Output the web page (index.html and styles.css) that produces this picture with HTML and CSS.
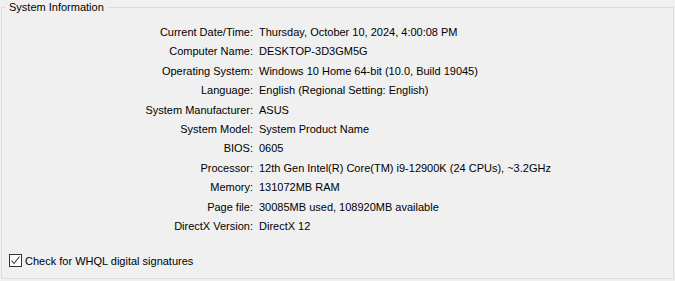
FILE: index.html
```html
<!DOCTYPE html>
<html>
<head>
    <meta charset="utf-8" />
    <title>System Information</title>
    <link rel="stylesheet" href="styles.css">
</head>
<body>
    <fieldset class="infoGroup">
        <legend class="groupTitle">System Information</legend>
        <div class="infoTable">
            <span class="infoLabel">Current Date/Time:</span><span class="infoValue">Thursday, October 10, 2024, 4:00:08 PM</span>
            <span class="infoLabel">Computer Name:</span><span class="infoValue">DESKTOP-3D3GM5G</span>
            <span class="infoLabel">Operating System:</span><span class="infoValue">Windows 10 Home 64-bit (10.0, Build 19045)</span>
            <span class="infoLabel">Language:</span><span class="infoValue">English (Regional Setting: English)</span>
            <span class="infoLabel">System Manufacturer:</span><span class="infoValue">ASUS</span>
            <span class="infoLabel">System Model:</span><span class="infoValue">System Product Name</span>
            <span class="infoLabel">BIOS:</span><span class="infoValue">0605</span>
            <span class="infoLabel">Processor:</span><span class="infoValue">12th Gen Intel(R) Core(TM) i9-12900K (24 CPUs), ~3.2GHz</span>
            <span class="infoLabel">Memory:</span><span class="infoValue">131072MB RAM</span>
            <span class="infoLabel">Page file:</span><span class="infoValue">30085MB used, 108920MB available</span>
            <span class="infoLabel">DirectX Version:</span><span class="infoValue">DirectX 12</span>
        </div>
        <label class="whqlCheck">
            <span class="checkBox">
                <svg width="11" height="11" viewBox="0 0 11 11"><path d="M1.5 5.5 L4 8.5 L9.5 1.5" fill="none" stroke="#333" stroke-width="1.1"/></svg>
            </span>
            Check for WHQL digital signatures
        </label>
    </fieldset>
</body>
</html>
```

FILE: styles.css
```css
html, body
{
    margin:0;
    padding:0;
    background-color:#f0f0f0;
}
body
{
    font-family:"Liberation Sans", Arial, sans-serif;
    font-size:11px;
    color:#000;
}
.infoGroup
{
    margin:0 1px;
    padding:0;
    height:279px;
    box-sizing:border-box;
    border:1px solid #dcdcdc;
    display:flex;
    flex-direction:column;
}
.groupTitle
{
    margin-left:3px;
    padding:0 4px;
    line-height:14px;
}
.infoTable
{
    display:grid;
    grid-template-columns:251px auto;
    column-gap:6px;
    justify-content:start;
    margin-top:9px;
    line-height:19.4px;
}
.infoLabel
{
    text-align:right;
}
.whqlCheck
{
    display:flex;
    align-items:center;
    gap:3px;
    margin-top:auto;
    margin-left:7px;
    margin-bottom:11px;
}
.checkBox
{
    width:11px;
    height:11px;
    border:1px solid #333;
    background:#fff;
    display:flex;
}
```
